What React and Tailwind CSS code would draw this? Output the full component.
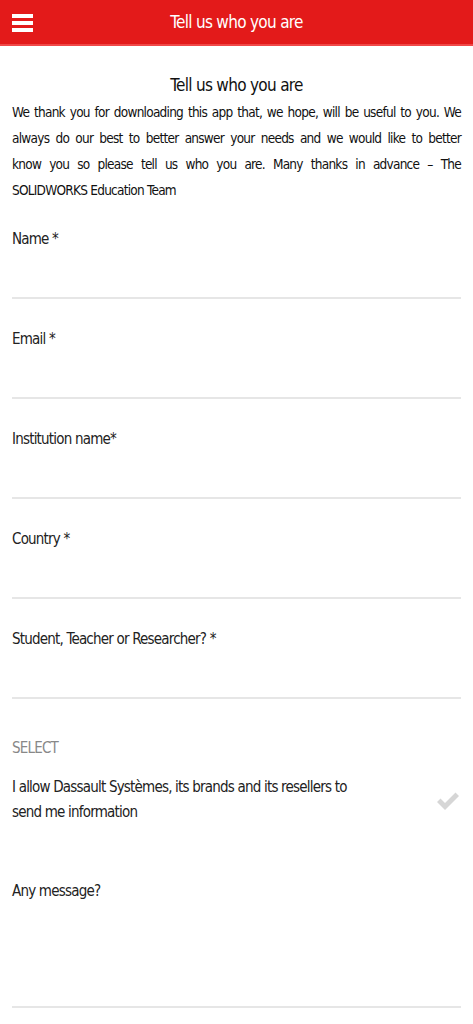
import React from 'react';

const font = { fontFamily: '"DejaVu Sans Condensed", "Liberation Sans", sans-serif' };

const fields = ['Name *', 'Email *', 'Institution name*', 'Country *', 'Student, Teacher or Researcher? *'];

const intro = [
  'We thank you for downloading this app that, we hope, will be useful to you. We',
  'always do our best to better answer your needs and we would like to better',
  'know you so please tell us who you are. Many thanks in advance – The',
];

function Field({ label }) {
  return (
    <div className="h-[100px] flex flex-col">
      <div className="pt-[28px] text-[15px] leading-[20px] tracking-[-0.8px] text-[#222]">{label}</div>
      <div className="mt-auto mb-[2px] h-[2px] bg-[#e6e6e6]" />
    </div>
  );
}

export default function App() {
  return (
    <div className="min-h-screen bg-white" style={font}>
      <header className="h-[46px] bg-[#e31a1a] border-b-2 border-[#f04848] flex items-center relative">
        <div className="absolute left-[12px] top-[14px] flex flex-col gap-[3px]">
          <span className="block w-[21px] h-[4px] bg-white" />
          <span className="block w-[21px] h-[4px] bg-white" />
          <span className="block w-[21px] h-[4px] bg-white" />
        </div>
        <h1 className="w-full text-center text-white text-[17px] tracking-[-0.7px] leading-none">Tell us who you are</h1>
      </header>

      <main className="px-[12px]">
        <h2 className="text-center text-[17px] tracking-[-0.7px] text-[#111] pt-[28px] leading-[22px]">Tell us who you are</h2>
        <div className="text-[13.5px] leading-[26px] tracking-[-0.75px] text-[#111] mt-[3px]">
          {intro.map((line) => (
            <div key={line} className="whitespace-nowrap text-justify [text-align-last:justify]">{line}</div>
          ))}
          <div>SOLIDWORKS Education Team</div>
        </div>

        <div className="-mt-[2px]">
          {fields.map((f) => (
            <Field key={f} label={f} />
          ))}
        </div>

        <div className="pt-[37px] text-[15px] leading-[20px] tracking-[-0.8px] text-[#888]">SELECT</div>

        <div className="mt-[17px] flex items-center justify-between">
          <div className="text-[15px] leading-[25px] tracking-[-0.8px] text-[#222]">
            I allow Dassault Systèmes, its brands and its resellers to
            <br />
            send me information
          </div>
          <svg width="24" height="21" viewBox="0 0 24 21" className="mr-[1px]">
            <path d="M1 12 L4.5 8.5 L9 13 L19.5 2.5 L23 6 L9 20 Z" fill="#d6d6d6" />
          </svg>
        </div>

        <div className="h-[127px] flex flex-col mt-[56px]">
          <div className="text-[15px] leading-[20px] tracking-[-0.8px] text-[#222]">Any message?</div>
          <div className="mt-auto h-[2px] bg-[#e6e6e6]" />
        </div>
      </main>
    </div>
  );
}
